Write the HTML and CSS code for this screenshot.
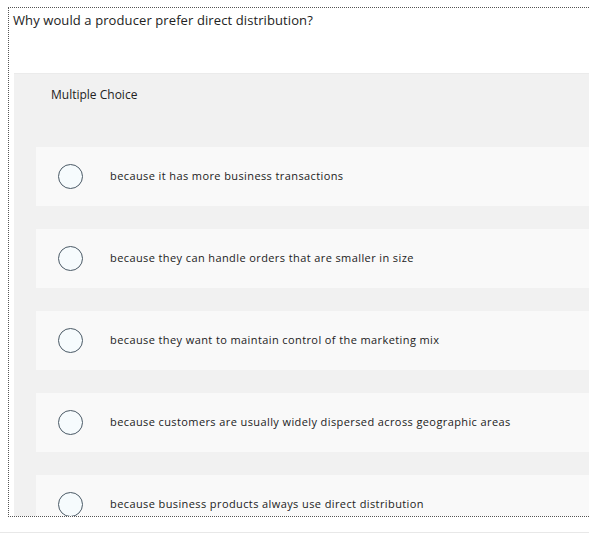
FILE: index.html
```html
<!DOCTYPE html>
<html>
<head>
<meta charset="utf-8">
<link rel="stylesheet" href="styles.css">
</head>
<body>
<div class="frame">
  <div class="question">Why would a producer prefer direct distribution?</div>
  <div class="panel">
    <div class="type">Multiple Choice</div>
    <div class="options">
      <div class="option"><span class="radio"></span><span class="label">because it has more business transactions</span></div>
      <div class="option"><span class="radio"></span><span class="label">because they can handle orders that are smaller in size</span></div>
      <div class="option"><span class="radio"></span><span class="label">because they want to maintain control of the marketing mix</span></div>
      <div class="option"><span class="radio"></span><span class="label">because customers are usually widely dispersed across geographic areas</span></div>
      <div class="option"><span class="radio"></span><span class="label">because business products always use direct distribution</span></div>
    </div>
  </div>
</div>
<div class="footer-line"></div>
</body>
</html>
```

FILE: styles.css
```css
html, body {
  margin: 0;
  padding: 0;
  background: #fff;
  overflow: hidden;
  width: 589px;
  height: 540px;
  font-family: "Open Sans", "DejaVu Sans", sans-serif;
  color: #333;
}
.frame {
  margin: 7px 0 0 8px;
  width: 600px;
  height: 508px;
  border-top: 1px dotted #555;
  border-left: 1px dotted #555;
  border-bottom: 1px dotted #555;
  overflow: hidden;
}
.question {
  height: 65px;
  box-sizing: border-box;
  padding: 3px 0 0 4px;
  font-size: 13px;
  line-height: 18px;
  letter-spacing: 0.1px;
  color: #222;
}
.panel {
  margin-left: 5px;
  background: #f1f1f1;
  border-top: 1px solid #ebebeb;
  height: 500px;
}
.type {
  height: 73px;
  box-sizing: border-box;
  padding: 13px 0 0 37px;
  font-size: 12px;
  line-height: 16px;
  color: #222;
}
.options {
  display: flex;
  flex-direction: column;
  gap: 23px;
  margin-left: 22px;
}
.option {
  display: flex;
  align-items: center;
  height: 59px;
  background: #f9f9f9;
  padding-left: 22px;
}
.radio {
  width: 23px;
  height: 23px;
  border: 1.5px solid #4b5a66;
  border-radius: 50%;
  background: #f6fbfd;
  flex: none;
}
.label {
  margin-left: 27px;
  margin-top: -2px;
  font-size: 11px;
  letter-spacing: 0.4px;
  color: #222;
}
.footer-line {
  margin-top: 15px;
  height: 1px;
  background: #e8e8e8;
}
```
